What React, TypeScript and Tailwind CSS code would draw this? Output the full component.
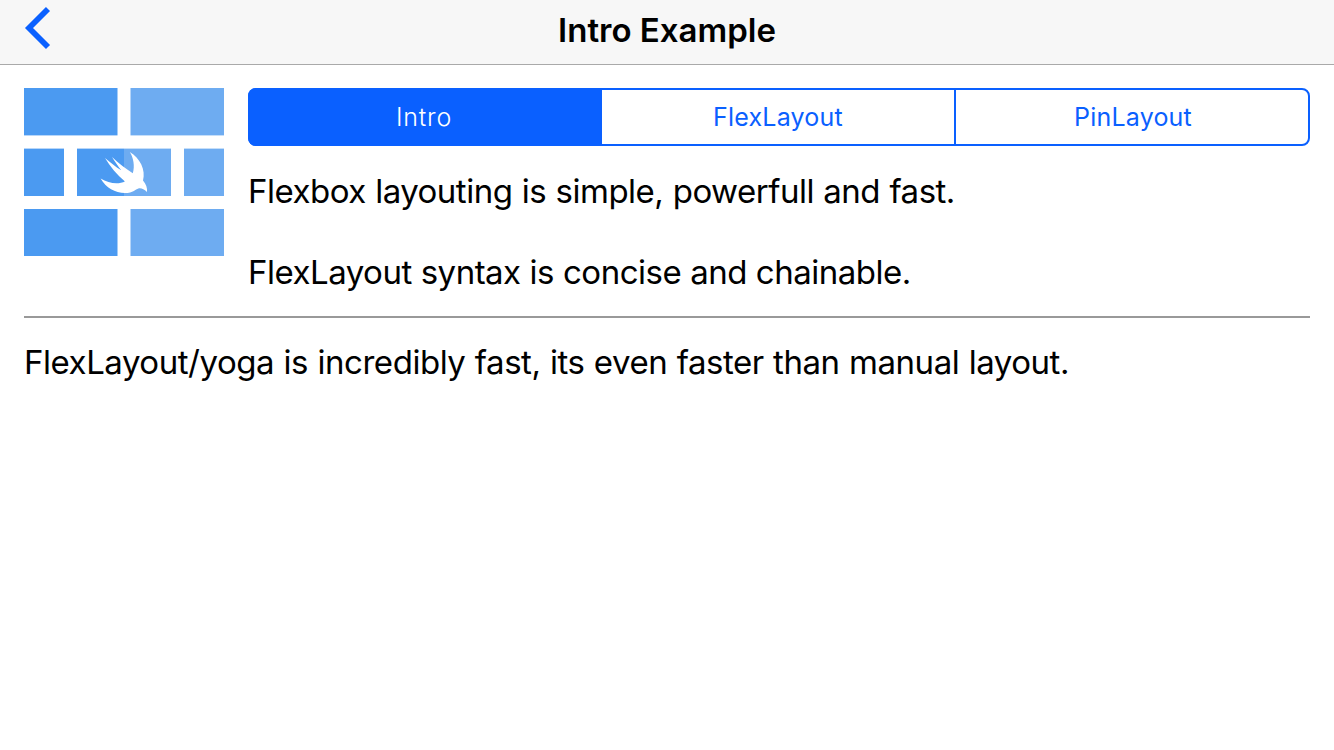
import React from "react";

function LayoutLogo() {
  return (
    <svg className="block h-[168px] w-[200px]" viewBox="0 0 200 168">
      <g fill="#4b9af1">
        <rect x="0" y="0" width="93.5" height="47.4" />
        <rect x="0" y="60.6" width="40" height="47.4" />
        <rect x="53" y="60.6" width="47" height="47.4" />
        <rect x="0" y="121" width="93.5" height="47" />
      </g>
      <g fill="#6eacf1">
        <rect x="106.5" y="0" width="93.5" height="47.4" />
        <rect x="100" y="60.6" width="47" height="47.4" />
        <rect x="160" y="60.6" width="40" height="47.4" />
        <rect x="106.5" y="121" width="93.5" height="47" />
      </g>
      <path
        fill="#fff"
        d="M105.8 64C116 70 122 82 119 92.5C122 96 123.5 100 123 104C120 101 118 100 115 100.2C112 101 109 105 101 105C91 105 82 100 76.6 90.6C85 96 95 96.5 101 93.5C93 87 86 78.5 81 70C86 74 92 79.5 97.3 82.2C94.5 79 90.8 73.5 88 69C95 75.5 102 81 108.8 85.3C111 78 109.5 70 105.8 64Z"
      />
    </svg>
  );
}

export default function App() {
  return (
    <div className="flex h-[750px] w-full flex-col bg-white font-[Inter,sans-serif] text-black">
      <header className="grid h-[65px] grid-cols-[1fr_auto_1fr] items-center border-b border-[#a9a9a9] bg-[#f7f7f7]">
        <svg className="mb-[8px] ml-[24px] h-[44px] w-[28px]" viewBox="0 0 28 44" fill="none" stroke="#0a60ff" strokeWidth="5.7">
          <path d="M24 3L5 22L24 41" />
        </svg>
        <h1 className="mb-[4px] text-[33px] leading-[40px] font-semibold">Intro Example</h1>
      </header>
      <main className="flex flex-col px-6 pt-[23px]">
        <div className="flex gap-6">
          <LayoutLogo />
          <div className="flex flex-1 flex-col">
            <nav className="grid h-[58px] grid-cols-[352px_352px_1fr] rounded-[8px] border-2 border-[#0a60ff] text-[25px] tracking-[0.2px] text-[#0a60ff]">
              <button className="-my-[2px] -ml-[2px] rounded-l-[8px] bg-[#0a60ff] pt-[2px] pr-[2px] font-light tracking-[0.8px] text-white">Intro</button>
              <button className="pt-[2px]">FlexLayout</button>
              <button className="border-l-2 border-[#0a60ff] pt-[2px] pl-[2px]">PinLayout</button>
            </nav>
            <div className="mt-[25px] flex flex-col gap-[40px] text-[33px] leading-[41px] whitespace-nowrap">
              <p className="tracking-[-0.5px] [word-spacing:0.6px]">Flexbox layouting is simple, powerfull and fast.</p>
              <p className="tracking-[-0.5px] [word-spacing:0.2px]">FlexLayout syntax is concise and chainable.</p>
            </div>
          </div>
        </div>
        <hr className="mt-[23px] border-t-2 border-[#999]" />
        <p className="mt-[24px] text-[33px] leading-[41px] tracking-[-0.46px] whitespace-nowrap [word-spacing:0.6px]">FlexLayout/yoga is incredibly fast, its even faster than manual layout.</p>
      </main>
    </div>
  );
}
